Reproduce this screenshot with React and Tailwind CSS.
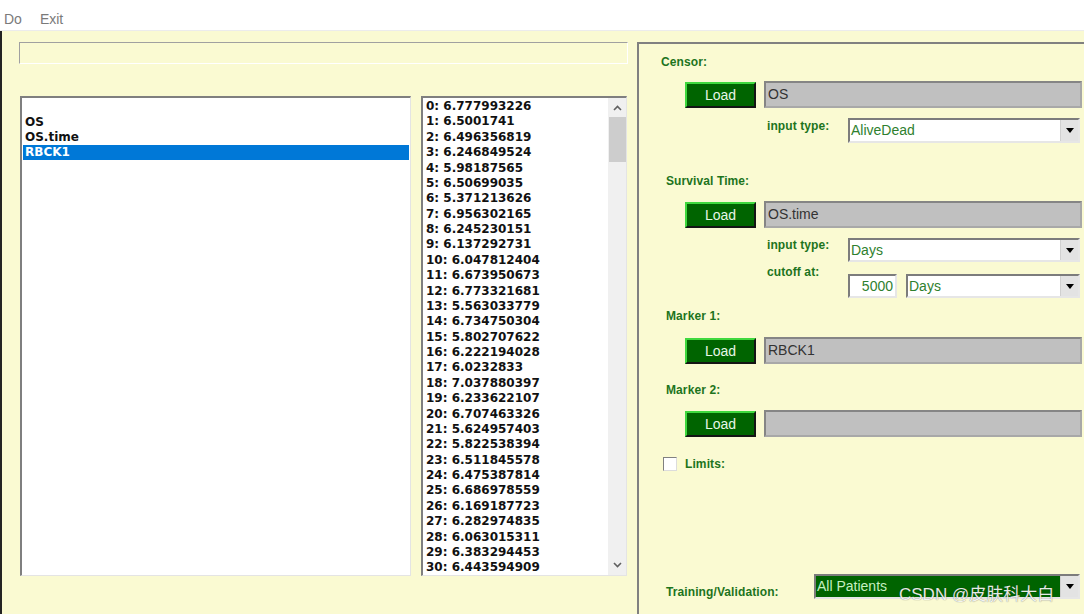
import React from "react";

const values = [
  "6.777993226", "6.5001741", "6.496356819", "6.246849524", "5.98187565",
  "6.50699035", "5.371213626", "6.956302165", "6.245230151", "6.137292731",
  "6.047812404", "6.673950673", "6.773321681", "5.563033779", "6.734750304",
  "5.802707622", "6.222194028", "6.0232833", "7.037880397", "6.233622107",
  "6.707463326", "5.624957403", "5.822538394", "6.511845578", "6.475387814",
  "6.686978559", "6.169187723", "6.282974835", "6.063015311", "6.383294453",
  "6.443594909",
];

const labelCls =
  "text-[12px] leading-[14px] font-bold text-[#1d741d] tracking-[0.1px] font-['Liberation_Sans',Arial,sans-serif] whitespace-nowrap";

function Arrow() {
  return (
    <div className="w-[18px] h-full bg-[#e3e3e3] border-l border-[#d0d0d0] flex items-center justify-center">
      <svg width="8" height="5" viewBox="0 0 8 5">
        <path d="M0 0 L8 0 L4 5 Z" fill="#000" />
      </svg>
    </div>
  );
}

function Select({ value, className = "", dark = false }) {
  return (
    <div
      className={`h-full flex items-stretch border-2 border-t-[#7c7c7c] border-l-[#7c7c7c] border-b-[#e6e6e6] border-r-[#e6e6e6] ${dark ? "bg-[#006400]" : "bg-white"} ${className}`}
    >
      <div
        className={`flex-1 flex items-center pl-[1px] text-[14px] font-['Liberation_Sans',Arial,sans-serif] ${dark ? "text-[#c6efc0]" : "text-[#2f7f2f]"}`}
      >
        {value}
      </div>
      <Arrow />
    </div>
  );
}

function LoadRow({ value }) {
  return (
    <div className="flex h-[27px] pl-[46px]">
      <button className="w-[71px] h-[26px] mt-[1px] bg-[#006400] border-2 border-t-[#3fd83f] border-l-[#3fd83f] border-b-[#141414] border-r-[#141414] text-[14px] text-[#e6f6e6] font-['Liberation_Sans',Arial,sans-serif]">
        Load
      </button>
      <div className="ml-[8px] w-[318px] h-[27px] bg-[#c0c0c0] border-2 border-t-[#858585] border-l-[#858585] border-b-[#a8a8a8] border-r-[#a8a8a8] flex items-center pl-[2px] text-[14px] text-[#333] font-['Liberation_Sans',Arial,sans-serif]">
        {value}
      </div>
    </div>
  );
}

export default function App() {
  return (
    <div className="w-[1084px] h-[614px] overflow-hidden flex flex-col bg-[#fafad2] relative">
      {/* menu */}
      <div className="h-[31px] bg-white border-b border-[#ececec] flex items-start pt-[11px] text-[14px] leading-[16px] text-[#7a7a7a] font-['Liberation_Sans',Arial,sans-serif]">
        <span className="ml-[4px]">Do</span>
        <span className="ml-[18px]">Exit</span>
      </div>

      <div className="flex-1 flex">
        <div className="w-[2px] bg-[#232323]" />

        {/* left area */}
        <div className="w-[635px] pl-[17px] pt-[11px]">
          <div className="w-[609px] h-[22px] border border-t-[#a0a0a0] border-l-[#a0a0a0] border-b-white border-r-white" />
          <div className="flex mt-[32px] ml-[1px] h-[480px]">
            <div className="w-[391px] h-full bg-white border-t-2 border-l-2 border-[#7f7f7f] border-b border-r border-b-[#e4e4e4] border-r-[#e4e4e4] pt-[17px] pl-[1px] font-['DejaVu_Sans',sans-serif] font-bold text-[12px] leading-[15px] text-[#111]">
              <div className="pl-[2px]">OS</div>
              <div className="pl-[2px]">OS.time</div>
              <div className="pl-[2px] mr-[1px] bg-[#0078d7] text-white">RBCK1</div>
            </div>

            <div className="ml-[10px] w-[206px] h-full bg-white border-t-2 border-l-2 border-[#7f7f7f] border-b border-r border-b-[#e4e4e4] border-r-[#e4e4e4] flex">
              <div className="flex-1 pl-[3px] pt-[1px] font-['DejaVu_Sans',sans-serif] font-bold text-[12px] leading-[15.37px] text-[#111] overflow-hidden">
                {values.map((v, i) => (
                  <div key={i} className="whitespace-nowrap">
                    {i}: {v}
                  </div>
                ))}
              </div>
              <div className="w-[18px] h-full bg-[#f0f0f0] flex flex-col items-center">
                <svg className="mt-[7px]" width="9" height="6" viewBox="0 0 9 6">
                  <path d="M1 5 L4.5 1.5 L8 5" fill="none" stroke="#606060" strokeWidth="1.6" />
                </svg>
                <div className="mt-[6px] w-[17px] h-[45px] bg-[#cdcdcd]" />
                <div className="flex-1" />
                <svg className="mb-[7px]" width="9" height="6" viewBox="0 0 9 6">
                  <path d="M1 1 L4.5 4.5 L8 1" fill="none" stroke="#606060" strokeWidth="1.6" />
                </svg>
              </div>
            </div>
          </div>
        </div>

        {/* right panel */}
        <div className="flex-1 mt-[11px] border-l-2 border-t-2 border-[#808080] flex flex-col">
          <div className={`${labelCls} mt-[11px] ml-[22px]`}>Censor:</div>
          <div className="mt-[12px]">
            <LoadRow value="OS" />
          </div>
          <div className="mt-[10px] h-[25px] flex">
            <div className={`${labelCls} ml-[128px] mt-[1px] w-[81px]`}>input type:</div>
            <Select value="AliveDead" className="w-[232px]" />
          </div>

          <div className={`${labelCls} mt-[31px] ml-[27px]`}>Survival Time:</div>
          <div className="mt-[13px]">
            <LoadRow value="OS.time" />
          </div>
          <div className="mt-[10px] h-[24px] flex">
            <div className={`${labelCls} ml-[128px] w-[81px]`}>input type:</div>
            <Select value="Days" className="w-[232px]" />
          </div>
          <div className="mt-[12px] h-[24px] flex">
            <div className={`${labelCls} ml-[128px] -mt-[9px] w-[81px]`}>cutoff at:</div>
            <div className="w-[49px] h-full bg-white border-2 border-t-[#7c7c7c] border-l-[#7c7c7c] border-b-[#e6e6e6] border-r-[#e6e6e6] flex items-center justify-end pr-[2px] text-[14px] text-[#2f7f2f] font-['Liberation_Sans',Arial,sans-serif]">
              5000
            </div>
            <Select value="Days" className="ml-[9px] w-[174px]" />
          </div>

          <div className={`${labelCls} mt-[11px] ml-[27px]`}>Marker 1:</div>
          <div className="mt-[14px]">
            <LoadRow value="RBCK1" />
          </div>

          <div className={`${labelCls} mt-[19px] ml-[27px]`}>Marker 2:</div>
          <div className="mt-[13px]">
            <LoadRow value="" />
          </div>

          <div className="mt-[20px] h-[14px] flex items-center ml-[24px]">
            <div className="w-[14px] h-[14px] bg-white border border-t-[#808080] border-l-[#808080] border-b-[#dcdcdc] border-r-[#dcdcdc]" />
            <div className={`${labelCls} ml-[8px]`}>Limits:</div>
          </div>

          <div className="mt-[103px] h-[25px] flex">
            <div className={`${labelCls} ml-[27px] mt-[11px] w-[148px]`}>Training/Validation:</div>
            <Select value="All Patients" dark className="w-[266px]" />
          </div>
        </div>
      </div>

      <div className="absolute left-[899px] top-[584px] text-[17px] leading-[22px] text-white/90 [text-shadow:0_0_1px_rgba(0,0,0,0.6)] font-['Liberation_Sans','Noto_Sans_CJK_SC',sans-serif] whitespace-nowrap">
        CSDN @皮肤科大白
      </div>
    </div>
  );
}
